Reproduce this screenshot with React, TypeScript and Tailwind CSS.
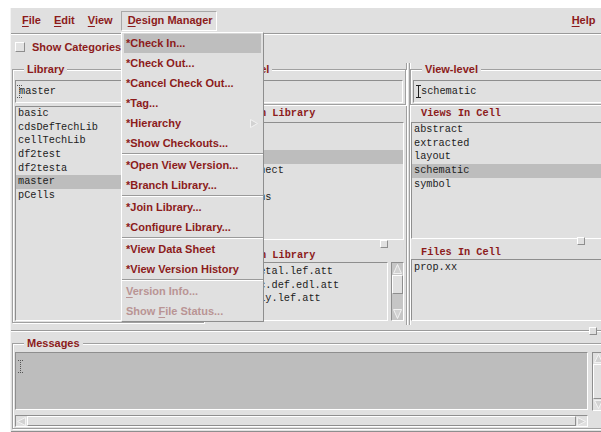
import React from "react";

const SANS = "font-['Liberation_Sans',Arial,sans-serif]";
const MONO = "font-['Liberation_Mono','Courier_New',monospace]";

const sunken = "border border-t-[#8e8e8e] border-l-[#8e8e8e] border-b-white border-r-white";
const raised = "border border-t-white border-l-white border-b-[#8e8e8e] border-r-[#8e8e8e]";

const libraries = ["basic", "cdsDefTechLib", "cellTechLib", "df2test", "df2testa", "master", "pCells"];
// rows that sit under the open menu are left blank
const cells = ["", "", "", "interconnect", "", "powerPlans"];
const libFiles = ["layer1_metal.lef.att", "cellLogic.def.edl.att", "metal_Poly.lef.att"];
const views = ["abstract", "extracted", "layout", "schematic", "symbol"];
const cellFiles = ["prop.xx"];

type Item = { label: string; active?: boolean; sub?: boolean; disabled?: boolean; mnemonic?: number } | "sep";

const dmItems: Item[] = [
  { label: "*Check In...", active: true },
  { label: "*Check Out..." },
  { label: "*Cancel Check Out..." },
  { label: "*Tag..." },
  { label: "*Hierarchy", sub: true },
  { label: "*Show Checkouts..." },
  "sep",
  { label: "*Open View Version..." },
  { label: "*Branch Library..." },
  "sep",
  { label: "*Join Library..." },
  { label: "*Configure Library..." },
  "sep",
  { label: "*View Data Sheet" },
  { label: "*View Version History" },
  "sep",
  { label: "Version Info...", disabled: true, mnemonic: 0 },
  { label: "Show File Status...", disabled: true, mnemonic: 5 },
];

function Mnemonic({ text, at = 0 }: { text: string; at?: number }) {
  return (
    <span className="whitespace-pre">
      {text.slice(0, at)}
      <span className="underline underline-offset-2">{text[at]}</span>
      {text.slice(at + 1)}
    </span>
  );
}

function Caret({ dotted }: { dotted?: boolean }) {
  return (
    <svg width="5" height="13" viewBox="0 0 5 13">
      <path
        d="M0 0.5H5M0 12.5H5M2.5 0V13"
        stroke={dotted ? "#555" : "#222"}
        strokeWidth="1"
        strokeDasharray={dotted ? "1 1" : undefined}
        fill="none"
      />
    </svg>
  );
}

function Group({ label, className = "", children }: { label: string; className?: string; children: React.ReactNode }) {
  return (
    <fieldset className={`border border-[#a0a0a0] shadow-[inset_1px_1px_0_#fff,1px_1px_0_#fff] px-[2px] pb-[1px] ${className}`}>
      <legend className="ml-[9px] px-[3px] bg-[#e0e0e0] text-[11px] leading-[13px] font-bold text-[#8c1b1b]">{label}</legend>
      {children}
    </fieldset>
  );
}

function Entry({ value, dottedCaret }: { value: string; dottedCaret?: boolean }) {
  return (
    <div className={`relative mt-[4px] h-[23px] ${sunken} flex items-center pl-[2px] ${MONO} text-[10.25px] text-[#1c1c1c]`}>
      {dottedCaret ? (
        <>
          <span className="absolute left-[1px] top-[4px]">
            <Caret dotted />
          </span>
          <span className="pl-[1px]">{value}</span>
        </>
      ) : (
        <>
          <Caret />
          <span>{value}</span>
        </>
      )}
    </div>
  );
}

function ListBox({ items, selected, className = "" }: { items: string[]; selected?: number; className?: string }) {
  return (
    <div className={`${sunken} overflow-hidden ${MONO} text-[10.25px] leading-[13.67px] text-[#1c1c1c] ${className}`}>
      {items.map((t, i) => (
        <div key={i} className={`h-[13.67px] pl-[2px] whitespace-nowrap ${i === selected ? "bg-[#bdbdbd]" : ""}`}>
          {t}
        </div>
      ))}
    </div>
  );
}

function PaneTitle({ text, className = "" }: { text: string; className?: string }) {
  return <div className={`pl-[11px] whitespace-nowrap ${MONO} font-bold text-[10.25px] text-[#8c1b1b] ${className}`}>{text}</div>;
}

function Arrow({ dir, w = 9, h = 9 }: { dir: "up" | "down" | "left" | "right"; w?: number; h?: number }) {
  const pts = {
    up: `0.5,${h - 0.5} ${w / 2},0.5 ${w - 0.5},${h - 0.5}`,
    down: `0.5,0.5 ${w / 2},${h - 0.5} ${w - 0.5},0.5`,
    left: `${w - 0.5},0.5 0.5,${h / 2} ${w - 0.5},${h - 0.5}`,
    right: `0.5,0.5 ${w - 0.5},${h / 2} 0.5,${h - 0.5}`,
  }[dir];
  return (
    <svg width={w} height={h} viewBox={`0 0 ${w} ${h}`}>
      <polygon points={pts} fill="#d2d2d2" stroke="#f2f2f2" strokeWidth="1" />
    </svg>
  );
}

function SashHandle({ className }: { className: string }) {
  return <div className={`absolute w-[8px] h-[8px] bg-[#e0e0e0] ${raised} ${className}`} />;
}

function MenuBar() {
  return (
    <div className="h-[26px] shrink-0 flex items-center border-b border-b-[#9a9a9a] shadow-[0_1px_0_#fff] text-[11px] font-bold text-[#8c1b1b]">
      <span className="ml-[11px]">
        <Mnemonic text="File" />
      </span>
      <span className="ml-[13px]">
        <Mnemonic text="Edit" />
      </span>
      <span className="ml-[13px]">
        <Mnemonic text="View" />
      </span>
      <span className="ml-[8px] w-[96px] h-[20px] flex items-center pl-[6px] border border-t-[#a8a8a8] border-l-[#a8a8a8] border-b-white border-r-white">
        <Mnemonic text="Design Manager" />
      </span>
      <span className="ml-[355px]">
        <Mnemonic text="Help" />
      </span>
    </div>
  );
}

function DesignMenu() {
  return (
    <div className={`absolute left-[110px] top-[24px] w-[143px] bg-[#e0e0e0] ${raised} text-[11px] font-bold`}>
      {dmItems.map((it, i) =>
        it === "sep" ? (
          <div key={i} className="h-[2px] border-t border-t-[#9a9a9a] border-b border-b-white" />
        ) : (
          <div
            key={i}
            className={`mx-[2px] h-[20px] flex items-center pl-[2px] whitespace-nowrap ${
              it.active ? "bg-[#bebebe] border-t border-t-[#d6d6d6]" : ""
            } ${it.disabled ? "text-[#b99494]" : "text-[#8c1b1b]"}`}
          >
            {it.disabled ? <Mnemonic text={it.label} at={it.mnemonic} /> : <span>{it.label}</span>}
            {it.sub && (
              <span className="ml-auto mr-[3px]">
                <Arrow dir="right" w={8} h={9} />
              </span>
            )}
          </div>
        )
      )}
    </div>
  );
}

export default function App() {
  return (
    <div className={`w-[601px] h-[432px] overflow-hidden bg-white pl-[10px] pt-[8px] ${SANS}`}>
      <div className="relative w-[606px] h-[424px] bg-[#e0e0e0] flex flex-col border-l border-l-[#f4f4f4]">
        <MenuBar />

        {/* categories toggle */}
        <div className="h-[29px] shrink-0 pt-[8px] pl-[4px] flex items-start">
          <div className={`w-[10px] h-[10px] bg-[#e2e2e2] ${raised}`} />
          <span className="ml-[7px] leading-[10px] text-[11px] font-bold text-[#8c1b1b]">Show Categories</span>
        </div>

        {/* library / cell / view columns */}
        <div className="h-[262px] shrink-0 flex pl-[1px] gap-[2px]">
          <Group label="Library" className="w-[192px] shrink-0 self-start">
            <Entry value="master" dottedCaret />
            <ListBox items={libraries} selected={5} className="mt-[3px] h-[215px]" />
          </Group>

          <div className="w-[201px] shrink-0 flex flex-col border-r border-r-[#a0a0a0] shadow-[1px_0_0_#fff]">
            <Group label="Cell-level">
              <Entry value="" />
            </Group>
            <PaneTitle text="Cells In Library" className="h-[17px] leading-[17px]" />
            <ListBox items={cells} selected={2} className="h-[118px] ml-[1px] mr-[2px]" />
            <div className="relative h-[8px]">
              <SashHandle className="top-[0px] right-[18px]" />
            </div>
            <PaneTitle text="Files In Library" className="h-[14px] leading-[14px]" />
            <div className="flex h-[59px] ml-[1px] mr-[2px]">
              <ListBox items={libFiles} className="flex-1 leading-[14.5px] pt-[1px]" />
              <div className={`ml-[3px] w-[13px] flex flex-col bg-[#c6c6c6] ${sunken}`}>
                <div className="h-[12px] flex items-center justify-center">
                  <Arrow dir="up" w={9} h={10} />
                </div>
                <div className={`h-[19px] bg-[#e0e0e0] ${raised}`} />
                <div className="flex-1" />
                <div className="h-[12px] flex items-center justify-center">
                  <Arrow dir="down" w={9} h={10} />
                </div>
              </div>
            </div>
          </div>

          <div className="w-[210px] shrink-0 flex flex-col border-l border-l-[#a0a0a0] shadow-[inset_1px_0_0_#fff]">
            <Group label="View-level">
              <Entry value="schematic" />
            </Group>
            <PaneTitle text="Views In Cell" className="h-[17px] leading-[17px]" />
            <ListBox items={views} selected={3} className="h-[117px] ml-[1px]" />
            <div className="relative h-[6px]">
              <SashHandle className="top-[-2px] right-[34px]" />
            </div>
            <PaneTitle text="Files In Cell" className="h-[14px] leading-[14px]" />
            <ListBox items={cellFiles} className="h-[62px] ml-[1px] pt-[1px]" />
          </div>
        </div>

        {/* pane sash */}
        <div className="relative h-[8px] shrink-0">
          <div className="mt-[5px] h-[2px] border-t border-t-[#9a9a9a] border-b border-b-white" />
          <SashHandle className="top-[2px] right-[19px]" />
        </div>

        <Group label="Messages" className="mt-[4px] ml-[1px] w-[600px]">
          <div className="mt-[2px] flex">
            <div className={`relative w-[573px] h-[58px] bg-[#bdbdbd] ${sunken}`}>
              <span className="absolute left-[2px] top-[7px]">
                <Caret dotted />
              </span>
            </div>
            <div className={`ml-[4px] w-[13px] h-[59px] flex flex-col ${sunken}`}>
              <div className="h-[11px] flex items-center justify-center">
                <Arrow dir="up" w={9} h={9} />
              </div>
              <div className={`flex-1 ${raised}`} />
              <div className="h-[11px] flex items-center justify-center">
                <Arrow dir="down" w={9} h={9} />
              </div>
            </div>
          </div>
          <div className={`mt-[4px] w-[573px] h-[12px] flex ${sunken}`}>
            <div className="w-[11px] flex items-center justify-center">
              <Arrow dir="left" w={9} h={9} />
            </div>
            <div className={`flex-1 ${raised}`} />
            <div className="w-[11px] flex items-center justify-center">
              <Arrow dir="right" w={9} h={9} />
            </div>
          </div>
        </Group>
        <div className="mt-[2px] border-t border-t-[#8e8e8e]" />

        <DesignMenu />
      </div>
    </div>
  );
}
